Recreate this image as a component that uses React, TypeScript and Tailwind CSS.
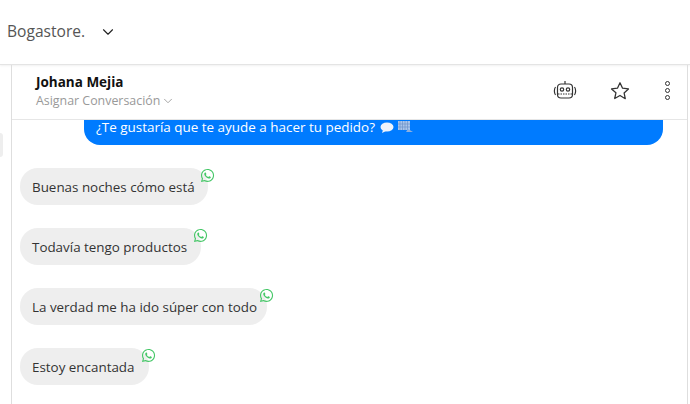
import { ChevronDown } from 'lucide-react'
import { FaWhatsapp } from 'react-icons/fa'
import React from 'react'

const messages = [
  { text: 'Buenas noches cómo está', width: 'w-[188px]' },
  { text: 'Todavía tengo productos', width: 'w-[181px]' },
  { text: 'La verdad me ha ido súper con todo', width: 'w-[247px]' },
  { text: 'Estoy encantada', width: 'w-[129px]' },
]

const RobotIcon = () => (
  <svg width="24" height="20" viewBox="0 0 24 20" fill="none" stroke="#333" strokeWidth="1.2">
    <path d="M12 1v3" />
    <rect x="4.500" y="4" width="15" height="14" rx="3.500" />
    <circle cx="9" cy="9.500" r="1.700" />
    <circle cx="15" cy="9.500" r="1.700" />
    <path d="M5 14h14" strokeDasharray="1.500 1" />
    <path d="M2.500 7C1 9 1 13 2.500 15M21.500 7c1.500 2 1.500 6 0 8" />
  </svg>
)

const StarIcon = () => (
  <svg width="20" height="19" viewBox="0 0 22 20" fill="none" stroke="#333" strokeWidth="1.400" strokeLinejoin="round">
    <path d="M11 1.500l2.800 6 6.500.8-4.800 4.400 1.300 6.300L11 15.500 5.200 18.800l1.300-6.300L1.700 8.300l6.500-.8z" />
  </svg>
)

const DotsIcon = () => (
  <div className="flex flex-col gap-[2px]">
    <span className="w-[5px] h-[5px] rounded-full border border-[#333]" />
    <span className="w-[5px] h-[5px] rounded-full border border-[#333]" />
    <span className="w-[5px] h-[5px] rounded-full border border-[#333]" />
  </div>
)

// Los dos emojis pequeños del mensaje
const BalloonIcon = () => (
  <svg width="14" height="11" viewBox="0 0 14 11">
    <ellipse cx="7" cy="5" rx="6.500" ry="4.500" fill="#eef3fb" />
    <path d="M3 8l-1 3 4-2z" fill="#eef3fb" />
  </svg>
)

const KeyboardIcon = () => (
  <svg width="17" height="12" viewBox="0 0 17 12">
    <rect x="1" y="0" width="12" height="9" fill="#a9c4ea" />
    <path d="M3 0v9M5.500 0v9M8 0v9M10.500 0v9M1 3h12M1 6h12" stroke="#6f93c9" strokeWidth="0.700" />
    <path d="M11 8l5 3H9z" fill="#8fb0de" />
  </svg>
)

export default function App() {
  return (
    <div className="w-[690px] h-[404px] overflow-hidden bg-white font-['Open_Sans',sans-serif] flex flex-col">
      {/* Barra superior */}
      <header className="h-[65px] shrink-0 flex items-center pl-[7px] gap-[14px] border-b border-[#e4e4e4] shadow-[0_1px_2px_rgba(0,0,0,0.06)]">
        <span className="text-[15.6px] text-[#555]">Bogastore.</span>
        <ChevronDown size={18} color="#222" strokeWidth={1.5} />
      </header>

      <div className="flex-1 flex min-h-0">
        <div className="w-[11px] shrink-0 flex flex-col">
          <div className="mt-[68px] w-[3px] h-[24px] rounded-r-full bg-[#eeeeee]" />
        </div>

        <main className="w-[677px] border-x border-[#dedede] flex flex-col">
          {/* Cabecera del chat */}
          <div className="h-[55px] shrink-0 flex items-center justify-between border-b border-[#e6e6e6] pl-[24px] pr-[17px]">
            <div className="flex flex-col -mt-[2px]">
              <span className="text-[13.5px] leading-[20px] font-bold text-[#111]">Johana Mejia</span>
              <span className="flex items-center gap-[1px] text-[12.4px] leading-[18px] text-[#999]">
                Asignar Conversación
                <ChevronDown size={14} color="#999" strokeWidth={1.5} />
              </span>
            </div>
            <div className="flex items-center -mt-[4px]">
              <div className="-ml-[1px]"><RobotIcon /></div>
              <div className="ml-[33px]"><StarIcon /></div>
              <div className="ml-[35px]"><DotsIcon /></div>
            </div>
          </div>

          {/* Mensajes */}
          <div className="flex-1 flex flex-col items-start pl-[8px]">
            <div className="ml-[64px] w-[579px] h-[25px] rounded-b-[16px] bg-[#007bff] pl-[12px] text-[13.45px] leading-[14px] text-white flex items-start gap-[5px]">
              ¿Te gustaría que te ayude a hacer tu pedido?
              <span className="flex items-center gap-[3px] mt-[1px]">
                <BalloonIcon />
                <KeyboardIcon />
              </span>
            </div>
            <div className="mt-[23px] flex flex-col items-start gap-[23px]">
              {messages.map((m) => (
                <div key={m.text} className={`relative h-[37px] flex items-center pl-[12px] pt-[1px] rounded-[18px] bg-[#eeeeee] text-[13.4px] text-[#333] ${m.width}`}>
                  {m.text}
                  <FaWhatsapp size={15} color="#45c767" className="absolute top-0 -right-[7px]" />
                </div>
              ))}
            </div>
          </div>
        </main>
      </div>
    </div>
  )
}
